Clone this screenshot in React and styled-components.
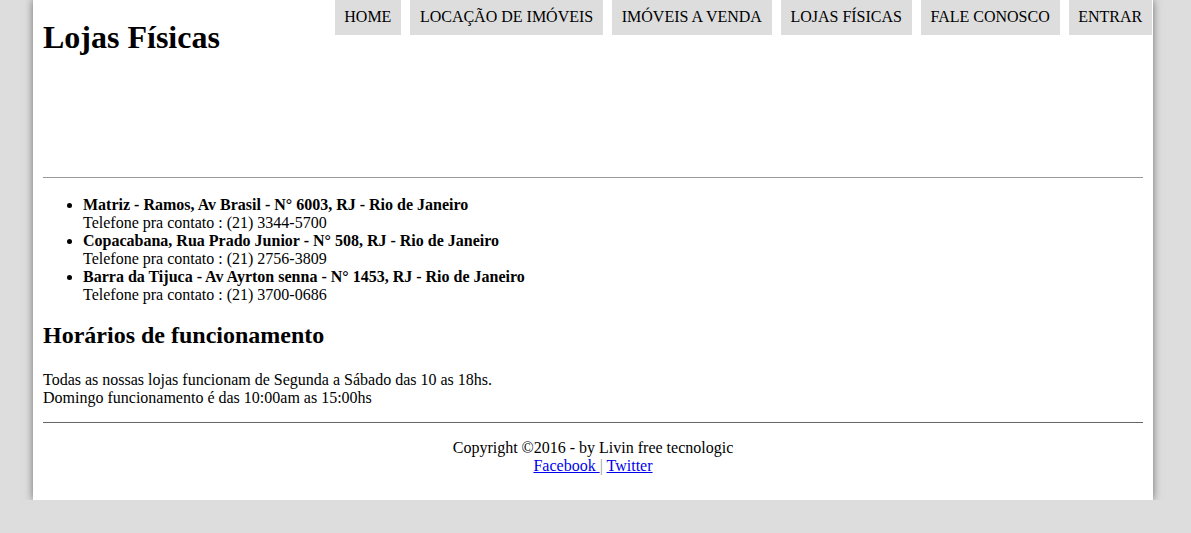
import React from "react";
import styled, { createGlobalStyle } from "styled-components";

const Global = createGlobalStyle`
  html, body { margin: 0; padding: 0; background: #dddddd; }
  body { font-family: "Liberation Serif", "Times New Roman", serif; font-size: 16px; color: #000; }
`;

const Page = styled.div`
  width: 1120px;
  margin-left: 33px;
  background: #fff;
  box-shadow: 0 0 8px rgba(0, 0, 0, 0.5);
  padding-bottom: 25px;
`;

const Header = styled.header`
  display: flex;
  justify-content: space-between;
  align-items: flex-start;
  height: 177px;
  padding: 0 1px 0 10px;
`;

const Title = styled.h1`
  margin: 19px 0 0;
  font-size: 32px;
  line-height: 36px;
  font-weight: bold;
`;

const Nav = styled.nav`
  display: flex;
  gap: 9px;
`;

const NavButton = styled.a`
  display: block;
  background: #dddddd;
  color: #000;
  text-decoration: none;
  font-size: 16px;
  line-height: 19px;
  padding: 7px 9.75px 9px;
  white-space: nowrap;
`;

const Divider = styled.hr`
  margin: 0 10px;
  height: 0;
  border: 0;
  border-top: 1px solid ${(p) => p.$color};
`;

const Section = styled.section`
  padding: 0 10px;
`;

const StoreList = styled.ul`
  margin: 18px 0 0;
  padding-left: 40px;
  line-height: 18px;
`;

const Store = styled.li`
  margin: 0;
`;

const StoreName = styled.strong`
  display: block;
  font-weight: bold;
`;

const Phone = styled.span`
  display: block;
`;

const SubTitle = styled.h2`
  margin: 18px 0 0;
  font-size: 24px;
  line-height: 27px;
  font-weight: bold;
`;

const Hours = styled.p`
  margin: 22px 0 15px;
  line-height: 18px;
`;

const Footer = styled.footer`
  text-align: center;
  line-height: 18px;
  padding-top: 16px;
`;

const FooterLink = styled.a`
  color: #0000ee;
  text-decoration: underline;
`;

const Sep = styled.span`
  color: #999;
`;

const stores = [
  { name: "Matriz - Ramos, Av Brasil - N° 6003, RJ - Rio de Janeiro", phone: "(21) 3344-5700" },
  { name: "Copacabana, Rua Prado Junior - N° 508, RJ - Rio de Janeiro", phone: "(21) 2756-3809" },
  { name: "Barra da Tijuca - Av Ayrton senna - N° 1453, RJ - Rio de Janeiro", phone: "(21) 3700-0686" },
];

const navItems = ["HOME", "LOCAÇÃO DE IMÓVEIS", "IMÓVEIS A VENDA", "LOJAS FÍSICAS", "FALE CONOSCO", "ENTRAR"];

export default function App() {
  return (
    <>
      <Global />
      <Page>
        <Header>
          <Title>Lojas Físicas</Title>
          <Nav>
            {navItems.map((n) => (
              <NavButton key={n} href="#">{n}</NavButton>
            ))}
          </Nav>
        </Header>
        <Divider $color="#999" />
        <Section>
          <StoreList>
            {stores.map((s) => (
              <Store key={s.name}>
                <StoreName>{s.name}</StoreName>
                <Phone>Telefone pra contato : {s.phone}</Phone>
              </Store>
            ))}
          </StoreList>
          <SubTitle>Horários de funcionamento</SubTitle>
          <Hours>
            Todas as nossas lojas funcionam de Segunda a Sábado das 10 as 18hs.
            <br />
            Domingo funcionamento é das 10:00am as 15:00hs
          </Hours>
        </Section>
        <Divider $color="#666" />
        <Footer>
          Copyright ©2016 - by Livin free tecnologic
          <br />
          <FooterLink href="#">Facebook </FooterLink>
          <Sep>|</Sep> <FooterLink href="#">Twitter</FooterLink>
        </Footer>
      </Page>
    </>
  );
}
